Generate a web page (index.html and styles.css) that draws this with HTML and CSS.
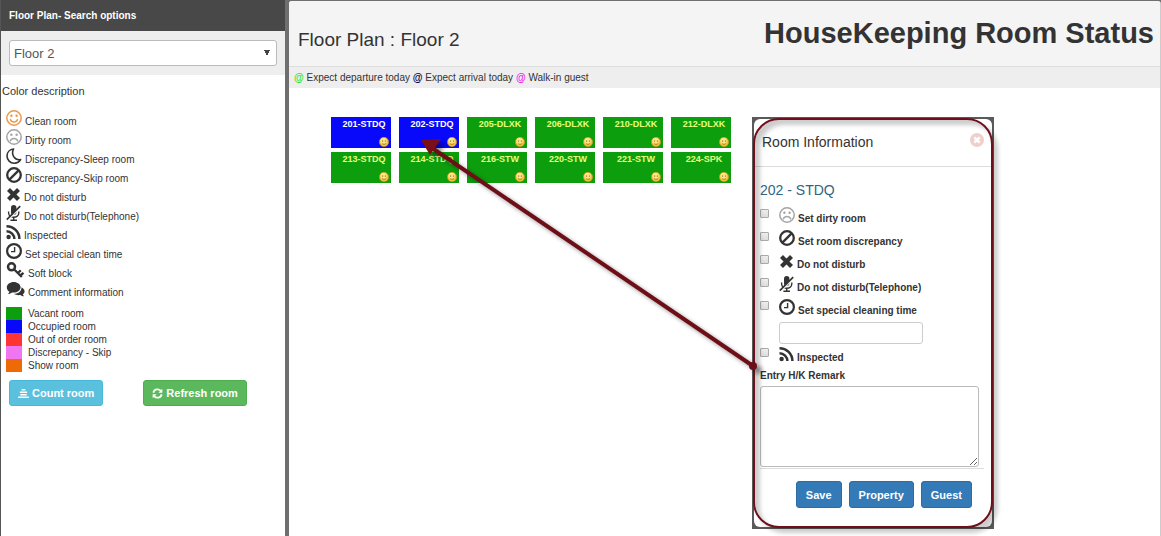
FILE: index.html
```
<!DOCTYPE html>
<html lang="en">
<head>
    <meta charset="UTF-8">
    <meta name="viewport" content="width=device-width, initial-scale=1.0">
    <title>HouseKeeping Room Status</title>
    <link rel="stylesheet" href="styles.css">
</head>
<body>
    <!-- Icon set -->
    <svg class="sprite" aria-hidden="true">
        <symbol id="i-smile" viewBox="0 0 16 16">
            <circle cx="8" cy="8" r="7.2" fill="none" stroke="currentColor" stroke-width="1.5"/>
            <circle cx="5.4" cy="5.8" r="1.2" fill="currentColor"/>
            <circle cx="10.6" cy="5.8" r="1.2" fill="currentColor"/>
            <path d="M4.4 9.6c1.2 3.2 6 3.2 7.2 0" fill="none" stroke="currentColor" stroke-width="1.5" stroke-linecap="round"/>
        </symbol>
        <symbol id="i-frown" viewBox="0 0 16 16">
            <circle cx="8" cy="8" r="7.2" fill="none" stroke="currentColor" stroke-width="1.5"/>
            <circle cx="5.4" cy="5.8" r="1.2" fill="currentColor"/>
            <circle cx="10.6" cy="5.8" r="1.2" fill="currentColor"/>
            <path d="M4.4 11.8c1.2-3.2 6-3.2 7.2 0" fill="none" stroke="currentColor" stroke-width="1.5" stroke-linecap="round"/>
        </symbol>
        <symbol id="i-moon" viewBox="0 0 16 16">
            <path d="M7.6 1C3.8 1.4 1 4.300 1 8c0 4 3.200 7.200 7.200 7.200 2.700 0 5.200-1.500 6.400-3.700-5.600 1.300-10-4.800-7-10.500z" fill="none" stroke="currentColor" stroke-width="1.600" stroke-linejoin="round"/>
        </symbol>
        <symbol id="i-ban" viewBox="0 0 16 16">
            <circle cx="8" cy="8" r="6.800" fill="none" stroke="currentColor" stroke-width="2.300"/>
            <path d="M12.600 3.400l-9.200 9.200" stroke="currentColor" stroke-width="2.300"/>
        </symbol>
        <symbol id="i-times" viewBox="0 0 15 16">
            <path d="M2.500 3.500l10 10M12.500 3.500l-10 10" stroke="currentColor" stroke-width="4.200"/>
        </symbol>
        <symbol id="i-mic" viewBox="0 0 15 16">
            <rect x="5" y="0" width="5.400" height="10" rx="2.700" fill="currentColor"/>
            <path d="M2.600 6.500v1.300c0 6 10.200 6 10.200 0v-1.300M7.700 12.400v2.600M4.400 15.300h6.600" fill="none" stroke="currentColor" stroke-width="1.400"/>
            <path d="M15 1.600l-14 14" stroke="#fff" stroke-width="2"/>
            <path d="M14.200 1.200l-13.400 13.400" stroke="currentColor" stroke-width="1.700"/>
        </symbol>
        <symbol id="i-rss" viewBox="0 0 15 16">
            <circle cx="2.600" cy="13" r="2.200" fill="currentColor"/>
            <path d="M.5 7.200a7.900 7.900 0 0 1 7.900 7.900M.5 2.200a12.900 12.900 0 0 1 12.900 12.900" fill="none" stroke="currentColor" stroke-width="2.500"/>
        </symbol>
        <symbol id="i-clock" viewBox="0 0 16 16">
            <circle cx="8" cy="8" r="6.900" fill="none" stroke="currentColor" stroke-width="2.200"/>
            <path d="M8.600 4v4.600h-3.600" fill="none" stroke="currentColor" stroke-width="1.400"/>
        </symbol>
        <symbol id="i-key" viewBox="0 0 18 16">
            <circle cx="5" cy="4.800" r="3.500" fill="none" stroke="currentColor" stroke-width="2.500"/>
            <path d="M7.500 7.200l7.800 7.800M11.300 11l3-2.600M13.800 13.500l3.200-2.700" fill="none" stroke="currentColor" stroke-width="2.300"/>
        </symbol>
        <symbol id="i-comments" viewBox="0 0 18 16">
            <path d="M15 6.300c4 2 3.700 5.600 1.300 7 .3.900.8 1.500 1.500 2-1.500.2-2.800-.3-3.900-1.200-2.300.4-4.700 0-6.300-1.300 4.600 0 7.500-2.800 7.400-6.500z" fill="currentColor"/>
            <path d="M7.200 1c3.700 0 6.900 2.300 6.900 5.200s-3.200 5.300-6.900 5.300c-.6 0-1.100 0-1.600-.1-1.100.9-2.500 1.500-4.200 1.500.8-.6 1.300-1.300 1.500-2.200-1.700-.9-2.600-2.600-2.600-4.500 0-2.900 3.200-5.200 6.900-5.200z" fill="currentColor"/>
        </symbol>
        <symbol id="i-count" viewBox="0 0 12 12">
            <path d="M4 2h4M2 4.700h8M2.500 7.400h7M.2 10h11.600" stroke="currentColor" stroke-width="1.700"/>
        </symbol>
        <symbol id="i-refresh" viewBox="0 0 12 12">
            <path d="M1.500 5.200c.7-4 5.600-5 8.200-2M10.500 6.800c-.7 4-5.600 5-8.200 2" fill="none" stroke="currentColor" stroke-width="1.900"/>
            <path d="M11.300.8v4.300h-4.300zM.7 11.200v-4.300h4.300z" fill="currentColor"/>
        </symbol>
        <symbol id="i-close" viewBox="0 0 14 14">
            <circle cx="7" cy="7" r="7" fill="currentColor"/>
            <path d="M4.300 4.300l5.400 5.400M9.700 4.300l-5.400 5.400" stroke="#fff" stroke-width="2.400"/>
        </symbol>
        <symbol id="i-face" viewBox="0 0 10 10">
            <circle cx="5" cy="5" r="4.700" fill="#f2c230" stroke="#c98d1c" stroke-width=".5"/>
            <circle cx="4.600" cy="4" r="3.200" fill="#fbe48a"/>
            <circle cx="3.600" cy="4" r=".6" fill="#6b4a10"/>
            <circle cx="6.400" cy="4" r=".6" fill="#6b4a10"/>
            <path d="M2.900 6.200c.9 1.500 3.300 1.500 4.200 0" fill="none" stroke="#8d6718" stroke-width=".7"/>
        </symbol>
    </svg>

    <div class="layout">
        <aside class="sidebar">
            <h2 class="sidebar-title">Floor Plan- Search options</h2>
            <div class="search-box">
                <select class="floor-select" aria-label="Floor">
                    <option>Floor 2</option>
                </select>
            </div>
            <h3 class="legend-title">Color description</h3>
            <ul class="icon-legend">
                <li><svg class="icon clean"><use href="#i-smile"/></svg>Clean room</li>
                <li><svg class="icon dirty"><use href="#i-frown"/></svg>Dirty room</li>
                <li><svg class="icon"><use href="#i-moon"/></svg>Discrepancy-Sleep room</li>
                <li><svg class="icon"><use href="#i-ban"/></svg>Discrepancy-Skip room</li>
                <li><svg class="icon narrow"><use href="#i-times"/></svg>Do not disturb</li>
                <li><svg class="icon narrow"><use href="#i-mic"/></svg>Do not disturb(Telephone)</li>
                <li><svg class="icon narrow"><use href="#i-rss"/></svg>Inspected</li>
                <li><svg class="icon"><use href="#i-clock"/></svg>Set special clean time</li>
                <li><svg class="icon wide"><use href="#i-key"/></svg>Soft block</li>
                <li><svg class="icon wide"><use href="#i-comments"/></svg>Comment information</li>
            </ul>
            <ul class="color-legend">
                <li><span class="swatch vacant"></span>Vacant room</li>
                <li><span class="swatch occupied"></span>Occupied room</li>
                <li><span class="swatch out-of-order"></span>Out of order room</li>
                <li><span class="swatch skip"></span>Discrepancy - Skip</li>
                <li><span class="swatch show"></span>Show room</li>
            </ul>
            <div class="sidebar-actions">
                <button class="btn btn-info"><svg class="btn-icon"><use href="#i-count"/></svg>Count room</button>
                <button class="btn btn-success"><svg class="btn-icon"><use href="#i-refresh"/></svg>Refresh room</button>
            </div>
        </aside>

        <main class="main">
            <header class="main-header">
                <h2 class="plan-title">Floor Plan : Floor 2</h2>
                <h1 class="page-title">HouseKeeping Room Status</h1>
            </header>
            <div class="guest-legend">
                <span class="at departure">@</span> Expect departure today
                <span class="at arrival">@</span> Expect arrival today
                <span class="at walkin">@</span> Walk-in guest
            </div>

            <div class="floor">
                <div class="rooms">
                    <button class="room occupied">201-STDQ<svg class="face"><use href="#i-face"/></svg></button>
                    <button class="room occupied">202-STDQ<svg class="face"><use href="#i-face"/></svg></button>
                    <button class="room vacant">205-DLXK<svg class="face"><use href="#i-face"/></svg></button>
                    <button class="room vacant">206-DLXK<svg class="face"><use href="#i-face"/></svg></button>
                    <button class="room vacant">210-DLXK<svg class="face"><use href="#i-face"/></svg></button>
                    <button class="room vacant">212-DLXK<svg class="face"><use href="#i-face"/></svg></button>
                    <button class="room vacant">213-STDQ<svg class="face"><use href="#i-face"/></svg></button>
                    <button class="room vacant">214-STDQ<svg class="face"><use href="#i-face"/></svg></button>
                    <button class="room vacant">216-STW<svg class="face"><use href="#i-face"/></svg></button>
                    <button class="room vacant">220-STW<svg class="face"><use href="#i-face"/></svg></button>
                    <button class="room vacant">221-STW<svg class="face"><use href="#i-face"/></svg></button>
                    <button class="room vacant">224-SPK<svg class="face"><use href="#i-face"/></svg></button>
                </div>

                <!-- Room information popup -->
                <div class="popup">
                    <form class="popup-content">
                        <div class="popup-header">
                            <h3>Room Information</h3>
                            <button type="button" class="close" aria-label="Close"><svg><use href="#i-close"/></svg></button>
                        </div>
                        <div class="popup-body">
                            <h4>202 - STDQ</h4>
                            <div class="option">
                                <input type="checkbox" id="dirty">
                                <label for="dirty"><svg class="icon dirty"><use href="#i-frown"/></svg>Set dirty room</label>
                            </div>
                            <div class="option">
                                <input type="checkbox" id="discrepancy">
                                <label for="discrepancy"><svg class="icon"><use href="#i-ban"/></svg>Set room discrepancy</label>
                            </div>
                            <div class="option">
                                <input type="checkbox" id="dnd">
                                <label for="dnd"><svg class="icon narrow"><use href="#i-times"/></svg>Do not disturb</label>
                            </div>
                            <div class="option">
                                <input type="checkbox" id="dnd-phone">
                                <label for="dnd-phone"><svg class="icon narrow"><use href="#i-mic"/></svg>Do not disturb(Telephone)</label>
                            </div>
                            <div class="option">
                                <input type="checkbox" id="clean-time">
                                <label for="clean-time"><svg class="icon"><use href="#i-clock"/></svg>Set special cleaning time</label>
                            </div>
                            <input type="text" class="time-input" aria-label="Special cleaning time">
                            <div class="option">
                                <input type="checkbox" id="inspected">
                                <label for="inspected"><svg class="icon narrow"><use href="#i-rss"/></svg>Inspected</label>
                            </div>
                            <label class="remark-label" for="remark">Entry H/K Remark</label>
                            <textarea id="remark"></textarea>
                            <div class="popup-footer">
                                <button type="button" class="btn btn-primary">Save</button>
                                <button type="button" class="btn btn-primary">Property</button>
                                <button type="button" class="btn btn-primary">Guest</button>
                            </div>
                        </div>
                    </form>
                    <div class="highlight"></div>
                </div>

                <!-- Pointer from the popup to its room -->
                <svg class="pointer" viewBox="0 0 350 245" aria-hidden="true">
                    <path d="M339 233L18 15" stroke="#6e0f18" stroke-width="4"/>
                    <path d="M7 7l20-1-11 16z" fill="#7a0f18"/>
                    <circle cx="339" cy="233" r="4" fill="#6e0f18"/>
                </svg>
            </div>
        </main>
    </div>
</body>
</html>
```
FILE: styles.css
```
* {
    box-sizing: border-box;
}

body {
    margin: 0;
    font-family: "Liberation Sans", Arial, sans-serif;
    font-size: 10px;
    line-height: 13px;
    color: #333;
    background-color: #706e6e;
}

h1, h2, h3, h4, ul {
    margin: 0;
    padding: 0;
    font-weight: normal;
}

ul {
    list-style: none;
}

button, input, select, textarea {
    font-family: inherit;
    color: inherit;
}

.sprite {
    display: none;
}

.layout {
    display: flex;
    min-height: 100vh;
}

/* Sidebar */
.sidebar {
    flex: 0 0 289px;
    border-left: 1px solid #555;
    border-right: 4px solid #706e6e;
    background-color: #fff;
}

.sidebar-title {
    padding: 9px 8px;
    background-color: #484848;
    color: #fff;
    font-size: 10px;
    font-weight: bold;
}

.search-box {
    padding: 9px 8px;
    background-color: #eee;
}

.floor-select {
    display: block;
    width: 100%;
    height: 26px;
    padding: 0 4px;
    border: 1px solid #bbb;
    border-radius: 3px;
    background-color: #fff;
    color: #555;
    font-size: 13px;
    appearance: none;
    background-image: linear-gradient(to bottom left, #444 50%, transparent 50%), linear-gradient(to bottom right, #444 50%, transparent 50%);
    background-size: 3px 6px;
    background-position: right 9px center, right 6px center;
    background-repeat: no-repeat;
}

.legend-title {
    padding: 10px 1px 12px;
    font-size: 11px;
}

.icon-legend {
    padding-left: 5px;
}

.icon-legend li {
    display: flex;
    align-items: flex-end;
    gap: 3px;
    height: 19px;
    padding-bottom: 1px;
    line-height: 12px;
}

.icon {
    flex: none;
    width: 16px;
    height: 16px;
    margin-bottom: 2px;
    color: #333;
}

.icon.narrow {
    width: 15px;
}

.icon.wide {
    width: 19px;
}

.icon.clean {
    color: #ea9a4c;
}

.icon.dirty {
    color: #a5a5a5;
}

.color-legend {
    padding: 7px 0 8px 5px;
}

.color-legend li {
    display: flex;
    gap: 6px;
}

.swatch {
    width: 16px;
    height: 13px;
}

.vacant {
    background-color: #0d9e0d;
}

.occupied {
    background-color: #0808fa;
}

.out-of-order {
    background-color: #fd3434;
}

.skip {
    background-color: #f075f0;
}

.show {
    background-color: #ee6a06;
}

.sidebar-actions {
    display: flex;
    gap: 40px;
    padding: 0 8px;
}

/* Buttons */
.btn {
    display: flex;
    align-items: center;
    gap: 3px;
    height: 26px;
    padding: 0 8px;
    border: 1px solid;
    border-radius: 3px;
    color: #fff;
    font-size: 11px;
    font-weight: bold;
    cursor: pointer;
}

.btn-icon {
    width: 11px;
    height: 11px;
}

.btn-info {
    background-color: #5bc0de;
    border-color: #46b8da;
}

.btn-success {
    background-color: #5cb85c;
    border-color: #4cae4c;
}

.btn-primary {
    height: 27px;
    padding: 0 9px;
    background-color: #337ab7;
    border-color: #2e6da4;
}

/* Main area */
.main {
    flex: 1;
    margin-top: 1px;
    border-right: 1px solid #ccc;
    border-radius: 3px 3px 0 0;
    background-color: #fff;
}

.main-header {
    display: flex;
    justify-content: space-between;
    height: 66px;
    padding: 14px 6px 0 9px;
    border-bottom: 1px solid #ddd;
    border-radius: 3px 3px 0 0;
    background-color: #f4f4f4;
}

.plan-title {
    padding-top: 14px;
    font-size: 19px;
    line-height: 22px;
}

.page-title {
    font-size: 29px;
    line-height: 36px;
    font-weight: bold;
}

.guest-legend {
    padding: 4px 5px;
    background-color: #eee;
}

.at {
    font-weight: bold;
}

.departure {
    color: #2fe62f;
}

.arrival {
    color: #00004d;
}

.walkin {
    color: #f01ff0;
}

.floor {
    position: relative;
    padding: 29px 42px;
}

.rooms {
    display: grid;
    grid-template-columns: repeat(6, 60px);
    gap: 4px 8px;
}

.room {
    display: flex;
    flex-direction: column;
    align-items: center;
    justify-content: space-between;
    height: 31px;
    padding: 2px 2px 1px 8px;
    border: none;
    color: #fff;
    font-size: 9px;
    font-weight: bold;
    cursor: pointer;
}

.room.vacant {
    color: #e6ff7d;
}

.face {
    align-self: flex-end;
    width: 10px;
    height: 10px;
}

/* Room popup */
.popup {
    position: absolute;
    top: 29px;
    left: 463px;
    width: 242px;
    padding: 2px;
    background-color: #5a5a5a;
}

.popup-content {
    border-radius: 6px;
    background-color: #fff;
}

.popup-header {
    display: flex;
    justify-content: space-between;
    align-items: flex-start;
    height: 48px;
    padding: 14px 8px 0;
    border-bottom: 1px solid #ddd;
}

.popup-header h3 {
    font-size: 14px;
    line-height: 18px;
}

.close {
    width: 14px;
    height: 14px;
    padding: 0;
    border: none;
    background: none;
    color: #efcfca;
    cursor: pointer;
}

.close svg {
    display: block;
    width: 14px;
    height: 14px;
}

.popup-body {
    padding: 14px 8px 19px 6px;
}

.popup-body h4 {
    padding-bottom: 8px;
    color: #31657f;
    font-size: 14px;
    line-height: 18px;
}

.option {
    display: flex;
    align-items: flex-start;
    gap: 10px;
    height: 23px;
}

.option input {
    appearance: none;
    width: 9px;
    height: 9px;
    margin: 2px 0 0;
    border: 1px solid #aaa;
    border-radius: 1px;
    background: linear-gradient(#eee, #ddd);
}

.option label {
    display: flex;
    align-items: flex-end;
    gap: 3px;
    height: 18px;
    line-height: 12px;
    font-weight: bold;
}

.time-input {
    display: block;
    width: 144px;
    height: 22px;
    margin: 0 0 2px 19px;
    border: 1px solid #ccc;
    border-radius: 3px;
}

.remark-label {
    display: block;
    padding-bottom: 4px;
    font-weight: bold;
}

textarea {
    display: block;
    width: 219px;
    height: 81px;
    border: 1px solid #bbb;
    border-radius: 3px;
}

.popup-footer {
    display: flex;
    justify-content: flex-end;
    gap: 7px;
    margin-top: 1px;
    padding: 12px 12px 0 0;
    border-top: 1px solid #ddd;
}

.highlight {
    position: absolute;
    inset: 1px;
    border: 2px solid #6e0f1c;
    border-radius: 26px;
    box-shadow: 5px 5px 4px rgba(0, 0, 0, 0.2), inset 5px 5px 4px rgba(0, 0, 0, 0.2);
    pointer-events: none;
}

.pointer {
    position: absolute;
    top: 45px;
    left: 125px;
    width: 350px;
    height: 245px;
    filter: drop-shadow(5px 4px 2px rgba(0, 0, 0, 0.4));
    pointer-events: none;
}
```
